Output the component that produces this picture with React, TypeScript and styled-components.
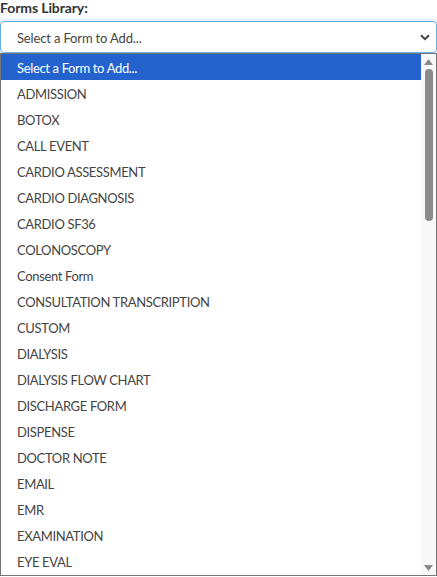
import React, { FC } from "react";
import styled, { createGlobalStyle } from "styled-components";

const GlobalStyle = createGlobalStyle`
  html, body {
    margin: 0;
    padding: 0;
    background: #fff;
  }
  body {
    font-family: Lato, "Open Sans", "Liberation Sans", sans-serif;
    color: #333;
  }
`;

const forms = [
  "Select a Form to Add...",
  "ADMISSION",
  "BOTOX",
  "CALL EVENT",
  "CARDIO ASSESSMENT",
  "CARDIO DIAGNOSIS",
  "CARDIO SF36",
  "COLONOSCOPY",
  "Consent Form",
  "CONSULTATION TRANSCRIPTION",
  "CUSTOM",
  "DIALYSIS",
  "DIALYSIS FLOW CHART",
  "DISCHARGE FORM",
  "DISPENSE",
  "DOCTOR NOTE",
  "EMAIL",
  "EMR",
  "EXAMINATION",
  "EYE EVAL",
];

const Wrapper = styled.div`
  width: 437px;
  display: flex;
  flex-direction: column;
`;

const Label = styled.label`
  font-size: 14px;
  font-weight: 700;
  color: #333;
  line-height: 18px;
  height: 22px;
  display: block;
  margin-top: -1px;
  letter-spacing: -0.1px;
`;

const SelectBox = styled.div`
  height: 32px;
  box-sizing: border-box;
  border: 1px solid #66afe9;
  border-radius: 4px;
  box-shadow: 0 0 6px rgba(102, 175, 233, 0.45);
  display: flex;
  align-items: center;
  justify-content: space-between;
  padding: 1px 6px 0 16px;
  font-size: 13px;
  letter-spacing: -0.15px;
  color: #444;
`;

const Dropdown = styled.div`
  height: 523px;
  box-sizing: border-box;
  border: 1px solid #767676;
  display: flex;
  overflow: hidden;
`;

const List = styled.ul`
  flex: 1;
  list-style: none;
  margin: 0;
  padding: 0;
`;

const Option = styled.li<{ $active?: boolean }>`
  height: 26px;
  box-sizing: border-box;
  padding-top: 1px;
  line-height: 26px;
  padding-left: 16px;
  font-size: 13px;
  letter-spacing: -0.35px;
  white-space: nowrap;
  overflow: hidden;
  color: ${(p) => (p.$active ? "#fff" : "#444")};
  background: ${(p) => (p.$active ? "#2463cd" : "transparent")};
`;

const Scrollbar = styled.div`
  width: 15px;
  background: #f8f8f8;
  display: flex;
  flex-direction: column;
  align-items: center;
  padding: 5px 0 4px;
  box-sizing: border-box;
`;

const Thumb = styled.div`
  width: 8px;
  height: 152px;
  border-radius: 4px;
  background: #8a8a8a;
  margin-top: 4px;
`;

const Spacer = styled.div`
  flex: 1;
`;

const Arrow: FC<{ down?: boolean }> = ({ down }) => (
  <svg width="9" height="6" viewBox="0 0 9 6">
    <polygon points={down ? "0,0 9,0 4.5,6" : "4.5,0 9,6 0,6"} fill="#8a8a8a" />
  </svg>
);

const Chevron: FC = () => (
  <svg width="10" height="7" viewBox="0 0 10 7">
    <path d="M1 1.2 L5 5.2 L9 1.2" fill="none" stroke="#444" strokeWidth="2" />
  </svg>
);

const App: FC = () => (
  <>
    <GlobalStyle />
    <Wrapper>
      <Label>Forms Library:</Label>
      <SelectBox>
        <span>Select a Form to Add...</span>
        <Chevron />
      </SelectBox>
      <Dropdown>
        <List>
          {forms.map((f, i) => (
            <Option key={f} $active={i === 0}>
              {f}
            </Option>
          ))}
        </List>
        <Scrollbar>
          <Arrow />
          <Thumb />
          <Spacer />
          <Arrow down />
        </Scrollbar>
      </Dropdown>
    </Wrapper>
  </>
);

export default App;
